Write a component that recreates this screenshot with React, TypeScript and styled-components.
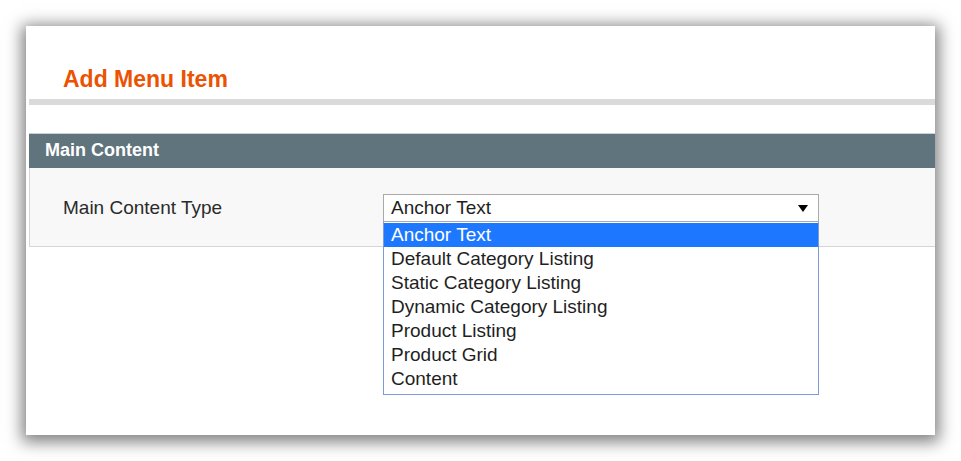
import styled, { createGlobalStyle } from 'styled-components';

const GlobalStyle = createGlobalStyle`
  html, body {
    margin: 0;
    padding: 0;
    background: #ffffff;
  }
  body {
    font-family: "Liberation Sans", Arial, sans-serif;
    color: #2f2f2f;
  }
`;

const options = [
  'Anchor Text',
  'Default Category Listing',
  'Static Category Listing',
  'Dynamic Category Listing',
  'Product Listing',
  'Product Grid',
  'Content',
];

const App = () => {
  const selected = 'Anchor Text';

  return (
    <>
      <GlobalStyle />
      <Page>
        <Panel>
          <TitleContainer>
            <Title>Add Menu Item</Title>
          </TitleContainer>
          <Separator />
          <SectionHeader>Main Content</SectionHeader>
          <SectionBody>
            <FieldRow>
              <Label>Main Content Type</Label>
              <SelectWrap>
                <SelectBox>
                  <span>{selected}</span>
                  <Arrow viewBox="0 0 10 7">
                    <polygon points="0,0 10,0 5,7" />
                  </Arrow>
                </SelectBox>
                <OptionList>
                  {options.map((o) => (
                    <OptionItem key={o} $active={o === selected}>
                      {o}
                    </OptionItem>
                  ))}
                </OptionList>
              </SelectWrap>
            </FieldRow>
          </SectionBody>
        </Panel>
      </Page>
    </>
  );
};

export default App;

const Page = styled.div`
  padding: 26px;
  width: 909px;
`;

const Panel = styled.div`
  width: 909px;
  height: 409px;
  background: #ffffff;
  box-shadow: 0 3px 15px 4px rgba(0, 0, 0, 0.5);
  padding-left: 3px;
  box-sizing: border-box;
  overflow: hidden;
`;

const TitleContainer = styled.div`
  padding: 40px 0 0 34px;
`;

const Title = styled.h1`
  margin: 0;
  font-size: 23px;
  line-height: 26px;
  font-weight: bold;
  color: #eb5202;
`;

const Separator = styled.div`
  margin-top: 7px;
  height: 6px;
  background: #dadada;
`;

const SectionHeader = styled.div`
  margin-top: 28px;
  height: 35px;
  box-sizing: border-box;
  border-top: 1px solid #c9d1d5;
  background: #5f747d;
  color: #ffffff;
  font-size: 18px;
  font-weight: bold;
  line-height: 33px;
  padding-left: 16px;
`;

const SectionBody = styled.div`
  height: 79px;
  box-sizing: border-box;
  background: #f8f8f8;
  border-left: 1px solid #d6d6d6;
  border-bottom: 1px solid #d6d6d6;
  padding: 26px 0 0 33px;
`;

const FieldRow = styled.div`
  display: flex;
  align-items: center;
`;

const Label = styled.div`
  width: 320px;
  font-size: 19px;
  line-height: 22px;
  color: #2b2b2b;
`;

const SelectWrap = styled.div`
  position: relative;
  width: 436px;
`;

const SelectBox = styled.div`
  height: 28px;
  box-sizing: border-box;
  border: 1px solid #a9a9a9;
  background: #ffffff;
  display: flex;
  align-items: center;
  justify-content: space-between;
  padding: 0 10px 0 7px;
  font-size: 19px;
  line-height: 22px;
  color: #1f1f1f;
`;

const Arrow = styled.svg`
  width: 10px;
  height: 7px;
  fill: #000000;
`;

const OptionList = styled.div`
  position: absolute;
  top: 28px;
  left: 0;
  width: 436px;
  box-sizing: border-box;
  border: 1px solid #7d9bd8;
  border-top: none;
  background: #ffffff;
  padding: 1px 0 3px;
`;

const OptionItem = styled.div<{ $active?: boolean }>`
  height: 24px;
  line-height: 24px;
  font-size: 19px;
  padding-left: 7px;
  color: ${(p) => (p.$active ? '#ffffff' : '#1f1f1f')};
  background: ${(p) => (p.$active ? '#1e77ff' : 'transparent')};
`;
